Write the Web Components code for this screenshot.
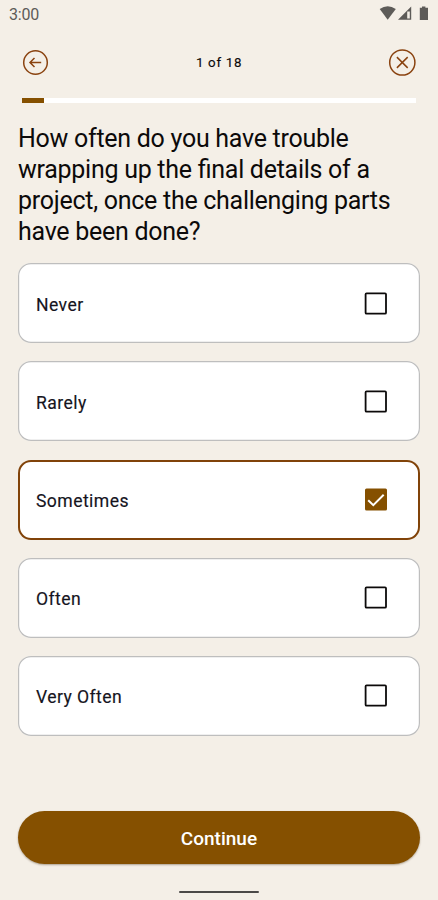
<!DOCTYPE html>
<html lang="en">
<head>
<meta charset="utf-8">
<title>Questionnaire</title>
<style>
html, body { margin: 0; height: 100%; background: #f4efe7; }
body { font-family: Roboto, "Liberation Sans", sans-serif; color: #0c0a0a; }
</style>
</head>
<body>
<quiz-screen></quiz-screen>
<script>
class BaseElement extends HTMLElement {
  connectedCallback() {
    if (this.shadowRoot) return;
    this.attachShadow({ mode: 'open' }).innerHTML = this.view();
  }
}

customElements.define('status-bar', class extends BaseElement {
  view() {
    return `<style>
      :host { display: flex; height: 28px; box-sizing: border-box; padding: 0 9px; justify-content: space-between; color: #5d5b58; }
      span { font-size: 16px; line-height: 29px; font-weight: 400; letter-spacing: -0.2px; color: #5d5b58; }
      svg { display: block; width: 50px; height: 28px; }
    </style>
    <span>3:00</span>
    <svg viewBox="380 0 50 28" fill="#5d5b58">
      <path d="M380.7 9.1 Q388.7 3.3 396.8 9.1 L388.7 19.8 Z"/>
      <path fill-rule="evenodd" d="M399 19.8 L412.2 6.6 V19.8 Z M408.2 11.5 V18.4 H410.8 V11.5 Z"/>
      <path d="M420.8 7.8 H423 V6.5 H426.4 V7.8 H429 V19.9 H420.8 Z"/>
    </svg>`;
  }
});

customElements.define('icon-button', class extends BaseElement {
  view() {
    const back = `<svg width="26" height="26" viewBox="0 0 26 26"><circle cx="13.5" cy="12.5" r="11.8"/><path d="M19.2 12.5 H8 M12.5 8 L8 12.5 L12.5 17"/></svg>`;
    const close = `<svg width="28" height="28" viewBox="0 0 28 28"><circle cx="14.3" cy="13.5" r="12.6"/><path d="M8.9 8.1 L19.7 18.9 M19.7 8.1 L8.9 18.9"/></svg>`;
    return `<style>
      :host { display: block; }
      svg { display: block; overflow: visible; fill: none; stroke: #8a4310; stroke-width: 1.5; }
    </style>${this.getAttribute('icon') === 'back' ? back : close}`;
  }
});

customElements.define('quiz-header', class extends BaseElement {
  view() {
    return `<style>
      :host { display: grid; grid-template-columns: 28px 1fr 28px; align-items: center; height: 28px; margin: 20.5px 22px 0; }
      span { text-align: center; font-size: 13.3px; line-height: 28px; font-weight: 400; letter-spacing: 0.7px; -webkit-text-stroke: 0.15px currentColor; }
    </style>
    <icon-button icon="back"></icon-button><span><slot></slot></span><icon-button icon="close"></icon-button>`;
  }
});

customElements.define('progress-line', class extends BaseElement {
  view() {
    return `<style>
      :host { display: block; height: 4.5px; margin: 21.5px 22px 0; background: #fff; }
      div { height: 100%; width: 22px; background: #855000; }
    </style><div></div>`;
  }
});

customElements.define('quiz-question', class extends BaseElement {
  view() {
    return `<style>
      :host { display: block; margin: 20px 18px 0; height: 141px; font-size: 25px; line-height: 31.1px; letter-spacing: -0.27px; font-feature-settings: "liga" 1; white-space: nowrap; }
    </style><slot></slot>`;
  }
});

customElements.define('answer-option', class extends BaseElement {
  view() {
    const on = this.hasAttribute('checked');
    const box = on
      ? `<rect x="1" y="0.6" width="22" height="22" rx="1.5" fill="#855000"/><path d="M4.2 12.2 L9.3 17.2 L19.7 6.7" fill="none" stroke="#fff" stroke-width="2"/>`
      : `<rect x="1.6" y="1.3" width="20.4" height="20.4" rx="1" fill="none" stroke="#0c0a0a" stroke-width="1.8"/>`;
    return `<style>
      :host { display: flex; align-items: center; justify-content: space-between; box-sizing: border-box; height: 80px;
        padding: 0 32px 0 18px; border-radius: 13px; background: #fff;
        box-shadow: inset 0 0 0 ${on ? '2px #814309' : '1.2px #bebebe'}; }
      span { font-size: 17.6px; line-height: 24px; font-weight: 400; letter-spacing: 0.42px; -webkit-text-stroke: 0.15px currentColor; color: #15141d; padding-top: 3px; }
      svg { display: block; width: 24px; height: 24px; margin-top: 1px; }
    </style><span><slot></slot></span><svg viewBox="0 0 24 24">${box}</svg>`;
  }
});

customElements.define('answer-list', class extends BaseElement {
  view() {
    return `<style>:host { display: flex; flex-direction: column; gap: 18.1px; margin: -0.2px 18px 0; }</style><slot></slot>`;
  }
});

customElements.define('primary-button', class extends BaseElement {
  view() {
    return `<style>
      :host { display: block; margin: auto 18px 0; }
      button { display: block; width: 100%; height: 53px; padding: 2px 0 0; border: 0; border-radius: 27px; background: #855000; color: #fff;
        font: 500 19px/51px Roboto, "Liberation Sans", sans-serif; box-shadow: 0 1px 2px rgba(70,45,10,.4); }
    </style><button><slot></slot></button>`;
  }
});

customElements.define('gesture-bar', class extends BaseElement {
  view() {
    return `<style>
      :host { display: flex; justify-content: center; height: 36px; box-sizing: border-box; padding-top: 26.5px; }
      div { width: 80px; height: 2px; border-radius: 1px; background: #4b4947; }
    </style><div></div>`;
  }
});

customElements.define('quiz-screen', class extends BaseElement {
  view() {
    return `<style>
      :host { display: flex; flex-direction: column; width: 438px; height: 900px; overflow: hidden; background: #f4efe7; }
    </style>
    <status-bar></status-bar>
    <quiz-header>1 of 18</quiz-header>
    <progress-line></progress-line>
    <quiz-question>How often do you have trouble<br>wrapping up the final details of a<br>project, once the challenging parts<br>have been done?</quiz-question>
    <answer-list>
      <answer-option>Never</answer-option>
      <answer-option>Rarely</answer-option>
      <answer-option checked>Sometimes</answer-option>
      <answer-option>Often</answer-option>
      <answer-option>Very Often</answer-option>
    </answer-list>
    <primary-button>Continue</primary-button>
    <gesture-bar></gesture-bar>`;
  }
});
</script>
</body>
</html>
